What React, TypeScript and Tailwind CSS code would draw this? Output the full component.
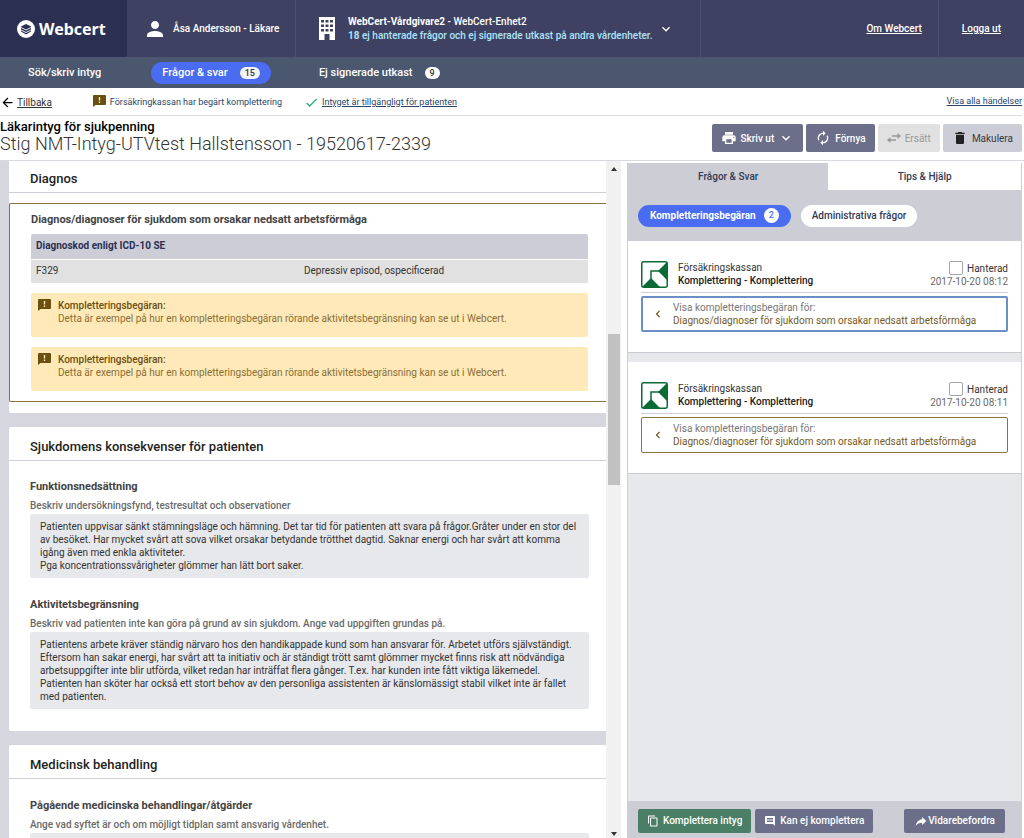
import type { ReactNode } from "react";
import {
    MdArrowBack,
    MdAutorenew,
    MdChevronLeft,
    MdCheck,
    MdComment,
    MdContentCopy,
    MdDelete,
    MdExpandMore,
    MdPerson,
    MdPrint,
    MdReply,
} from "react-icons/md";

interface Question {
    id: number;
    date: string;
    active: boolean;
}

const questions: Question[] = [
    { id: 1, date: "2017-10-20 08:12", active: true },
    { id: 2, date: "2017-10-20 08:11", active: false },
];

function WebcertLogo() {
    return (
        <a href="#" className="flex items-center gap-1 text-white">
            <svg viewBox="0 0 18 18" className="size-[18px]" aria-hidden="true">
                <circle cx="9" cy="9" r="9" fill="#fff" />
                <path d="M4 6.5 9 4 14 6.500V11.500L9 14.500 4 11.500Z" fill="#2b3052" />
                <path d="M4 7.500 9 10 14 7.500M4 10 9 12.500 14 10" fill="none" stroke="#fff" strokeWidth="0.9" />
            </svg>
            <span className="font-['Noto_Sans',sans-serif] text-base font-bold">Webcert</span>
        </a>
    );
}

function BuildingIcon() {
    return (
        <svg viewBox="0 0 16 23" className="h-[23px] w-4 shrink-0" aria-hidden="true">
            <path d="M0 0H16V23H10.5V17H5.5V23H0Z" fill="#fff" />
            <path
                d="M2 3h3v2.5H2zM6.5 3h3v2.5h-3zM11 3h3v2.5h-3zM2 7.5h3V10H2zM6.5 7.5h3V10h-3zM11 7.5h3V10h-3zM2 12h3v2.5H2zM6.5 12h3v2.5h-3zM11 12h3v2.5h-3z"
                fill="#3e4161"
            />
        </svg>
    );
}

function NoticeIcon() {
    return (
        <svg viewBox="0 0 13 12" className="h-3 w-[13px] shrink-0" aria-hidden="true">
            <path d="M1 0H12A1 1 0 0 1 13 1V9A1 1 0 0 1 12 10H2.500L0 12V1A1 1 0 0 1 1 0Z" fill="#6a4f10" />
            <path d="M5.800 2H7.200V5.500H5.800ZM5.800 6.500H7.200V8H5.800Z" fill="#ffe9b8" />
        </svg>
    );
}

function ReplaceIcon() {
    return (
        <svg viewBox="0 0 14 10" className="h-2.5 w-3.5" aria-hidden="true">
            <path d="M5 2.200H10.500V0L14 3 10.500 6V3.800H5ZM9 6.200H3.500V4L0 7l3.500 3V7.800H9Z" fill="currentColor" />
        </svg>
    );
}

function FkLogo() {
    return (
        <svg viewBox="0 0 27 27" className="size-[27px] shrink-0" aria-hidden="true">
            <rect x="0.75" y="0.75" width="25.5" height="25.5" rx="2" fill="#fff" stroke="#0b6b35" strokeWidth="1.5" />
            <path d="M26 1V19L17.500 10.500V9.500Z" fill="#0b6b35" />
            <path d="M1 26 9.500 17.500 10.500 17.500 19 26Z" fill="#0b6b35" />
            <path d="M10 18V10H18" fill="none" stroke="#0b6b35" strokeWidth="1.5" />
        </svg>
    );
}

function Section({ title, children }: { title: string; children: ReactNode }) {
    return (
        <section className="rounded-l-xs bg-white">
            <h2 className="flex h-[34px] items-center border-b border-[#cdced6] pt-1.5 pl-[21px] text-[13px] font-medium text-[#222]">{title}</h2>
            {children}
        </section>
    );
}

function Field({ label, hint, children }: { label: string; hint: string; children?: ReactNode }) {
    return (
        <div>
            <h3 className="text-[11px] leading-4 font-bold text-[#444]">{label}</h3>
            <p className="mt-[3px] text-[10px] leading-4 font-medium text-[#6a6a6a]">{hint}</p>
            <div className="min-h-6 rounded-xs bg-[#e7e8ec] px-2.5 py-1.5 text-[10px] leading-[13px] text-[#333]">{children}</div>
        </div>
    );
}

function CompletionNotice() {
    return (
        <div className="mt-2.5 flex h-11 gap-[7px] rounded-xs bg-[#ffe9b8] px-[7px] pt-1.5 text-[10px] leading-[13px]">
            <NoticeIcon />
            <div>
                <p className="font-medium text-[#6a4f10]">Kompletteringsbegäran:</p>
                <p className="text-[#8a6f33]">Detta är exempel på hur en kompletteringsbegäran rörande aktivitetsbegränsning kan se ut i Webcert.</p>
            </div>
        </div>
    );
}

function QuestionCard({ question }: { question: Question }) {
    return (
        <article className="h-28 border-b border-[#c8c9d2] bg-white px-[13px] pt-5">
            <div className="flex items-start border-b border-[#cdced6] pb-1 text-[10px] leading-[13px]">
                <FkLogo />
                <div className="ml-2.5">
                    <p className="text-[#333]">Försäkringskassan</p>
                    <p className="font-medium text-[#222]">Komplettering - Komplettering</p>
                </div>
                <div className="ml-auto text-right">
                    <label className="flex items-center justify-end gap-1 text-[#333]">
                        <input type="checkbox" className="size-3.5 appearance-none rounded-xs border border-[#a5a5ad] bg-white" />
                        Hanterad
                    </label>
                    <p className="text-[#6a6a6a]">{question.date}</p>
                </div>
            </div>
            <button
                className={
                    question.active
                        ? "mt-[3px] flex w-full items-center rounded-xs border-2 border-[#6a8ec6] py-[3px] pl-2 text-left text-[10px] leading-[13px]"
                        : "mt-[3px] flex w-full items-center rounded-xs border border-[#8a7245] py-1 pl-[9px] text-left text-[10px] leading-[13px]"
                }
            >
                <MdChevronLeft className="size-3.5 text-[#6a4f10]" />
                <span className="ml-2">
                    <span className="block text-[#777]">Visa kompletteringsbegäran för:</span>
                    <span className="block text-[#75591c]">Diagnos/diagnoser för sjukdom som orsakar nedsatt arbetsförmåga</span>
                </span>
            </button>
        </article>
    );
}

export default function App() {
    return (
        <div className="flex h-screen flex-col overflow-hidden bg-white font-[Roboto,sans-serif]">
            <header className="flex h-[57px] shrink-0 bg-[#3e4161] text-[10px] text-white">
                <div className="flex w-[127px] items-center bg-[#2b3052] pl-[17px]">
                    <WebcertLogo />
                </div>
                <div className="flex w-[169px] items-center gap-1.5 border-r border-[#4b4e6e] pl-4 font-medium">
                    <MdPerson className="size-6" />
                    Åsa Andersson - Läkare
                </div>
                <div className="flex w-[405px] items-center border-r border-[#4b4e6e] pl-[23px]">
                    <BuildingIcon />
                    <div className="ml-[13px] leading-[14px]">
                        <p>
                            <b className="font-bold">WebCert-Vårdgivare2</b> <span className="font-medium">- WebCert-Enhet2</span>
                        </p>
                        <p className="font-medium text-[#aee3fb]">
                            <b>18</b> ej hanterade frågor och ej signerade utkast på andra vårdenheter.
                        </p>
                    </div>
                    <button aria-label="Byt vårdenhet" className="ml-1.5">
                        <MdExpandMore className="size-4" />
                    </button>
                </div>
                <div className="ml-auto flex font-medium">
                    <a href="#" className="flex items-center border-r border-[#4b4e6e] px-4 underline">Om Webcert</a>
                    <a href="#" className="flex items-center px-[23px] underline">Logga ut</a>
                </div>
            </header>

            <nav className="flex h-[31px] shrink-0 items-center bg-[#4b566f] pt-px pl-7 text-[11px] font-medium text-white">
                <a href="#">Sök/skriv intyg</a>
                <a href="#" className="ml-[50px] flex h-[22px] items-center gap-3 rounded-full bg-[#4a6cf0] px-[11px]">
                    Frågor &amp; svar
                    <span className="rounded-full bg-[#f3f3f8] px-[5px] text-[9px] leading-3 text-[#333]">15</span>
                </a>
                <a href="#" className="ml-12 flex items-center gap-3">
                    Ej signerade utkast
                    <span className="rounded-full bg-white px-[5px] text-[9px] leading-3 text-[#333]">9</span>
                </a>
            </nav>

            <div className="mr-0.5 flex h-7 shrink-0 items-center border-b border-[#dcdee3] pt-0.5 text-[9px] text-[#2a4468]">
                <a href="#" className="flex items-center gap-0.5 text-[10px] text-[#333]">
                    <MdArrowBack className="size-[15px] text-black" />
                    <span className="underline">Tillbaka</span>
                </a>
                <span className="mr-1 ml-[41px] pb-1">
                    <NoticeIcon />
                </span>
                <span>Försäkringkassan har begärt komplettering</span>
                <MdCheck className="ml-[22px] size-[15px] text-[#2fae82]" />
                <a href="#" className="ml-[3px] underline">Intyget är tillgängligt för patienten</a>
                <a href="#" className="ml-auto pb-0.5 underline">Visa alla händelser</a>
            </div>

            <div className="flex h-11 shrink-0 justify-between">
                <div className="pt-[3px]">
                    <h1 className="text-[13px] leading-4 font-medium text-black">Läkarintyg för sjukpenning</h1>
                    <p className="text-lg leading-[18px] font-light text-[#333]">Stig NMT-Intyg-UTVtest Hallstensson - 19520617-2339</p>
                </div>
                <div className="mr-0.5 flex items-center gap-[3px] text-[10px] font-medium">
                    <button className="flex h-7 items-center gap-1 rounded-xs bg-[#6b6f89] px-[9px] text-white">
                        <MdPrint className="size-4" />
                        Skriv ut
                        <MdExpandMore className="size-4" />
                    </button>
                    <button className="flex h-7 items-center gap-1 rounded-xs bg-[#6b6f89] px-[9px] text-white">
                        <MdAutorenew className="size-4" />
                        Förnya
                    </button>
                    <button disabled className="flex h-7 items-center gap-1 rounded-xs bg-[#e1e1e1] px-[9px] font-normal text-[#999]">
                        <ReplaceIcon />
                        Ersätt
                    </button>
                    <button className="flex h-7 items-center gap-1 rounded-xs bg-[#cdcdd7] px-[9px] font-normal text-[#3a3a3a]">
                        <MdDelete className="size-4 text-[#222]" />
                        Makulera
                    </button>
                </div>
            </div>

            <main className="flex min-h-0 flex-1 border-t border-[#d8d8df]">
                <div className="min-w-0 flex-1 overflow-hidden bg-[#d6d6de] pl-[9px]">
                    <div className="-mt-0.5 space-y-3.5">
                        <Section title="Diagnos">
                            <div className="pt-2.5 pb-[11px]">
                                <div className="rounded-l-xs border border-r-0 border-[#8a7245] pt-2 pr-[18px] pb-2.5 pl-[21px]">
                                    <h3 className="text-[11px] leading-4 font-bold text-[#444]">Diagnos/diagnoser för sjukdom som orsakar nedsatt arbetsförmåga</h3>
                                    <table className="mt-1.5 w-full table-fixed text-left text-[10px] leading-[14px]">
                                        <colgroup>
                                            <col className="w-[49%]" />
                                            <col />
                                        </colgroup>
                                        <thead>
                                            <tr className="h-[25px] border-b border-white bg-[#cdcdd7] text-[#2b3052]">
                                                <th colSpan={2} className="rounded-t-xs px-[5px] font-bold">Diagnoskod enligt ICD-10 SE</th>
                                            </tr>
                                        </thead>
                                        <tbody>
                                            <tr className="h-6 bg-[#e1e1e1] text-[#333]">
                                                <td className="px-[5px]">F329</td>
                                                <td>Depressiv episod, ospecificerad</td>
                                            </tr>
                                        </tbody>
                                    </table>
                                    <CompletionNotice />
                                    <CompletionNotice />
                                </div>
                            </div>
                        </Section>
                        <Section title="Sjukdomens konsekvenser för patienten">
                            <div className="space-y-[19px] pt-[18px] pr-[17px] pb-[22px] pl-[21px]">
                                <Field label="Funktionsnedsättning" hint="Beskriv undersökningsfynd, testresultat och observationer">
                                    <p>
                                        Patienten uppvisar sänkt stämningsläge och hämning. Det tar tid för patienten att svara på frågor.Gråter under en stor del av
                                        besöket. Har mycket svårt att sova vilket orsakar betydande trötthet dagtid. Saknar energi och har svårt att komma igång även
                                        med enkla aktiviteter.
                                    </p>
                                    <p>Pga koncentrationssvårigheter glömmer han lätt bort saker.</p>
                                </Field>
                                <Field
                                    label="Aktivitetsbegränsning"
                                    hint="Beskriv vad patienten inte kan göra på grund av sin sjukdom. Ange vad uppgiften grundas på."
                                >
                                    <p>
                                        Patientens arbete kräver ständig närvaro hos den handikappade kund som han ansvarar för. Arbetet utförs självständigt.
                                        Eftersom han sakar energi, har svårt att ta initiativ och är ständigt trött samt glömmer mycket finns risk att nödvändiga
                                        arbetsuppgifter inte blir utförda, vilket redan har inträffat flera gånger. T.ex. har kunden inte fått viktiga läkemedel.
                                    </p>
                                    <p>
                                        Patienten han sköter har också ett stort behov av den personliga assistenten är känslomässigt stabil vilket inte är fallet med
                                        patienten.
                                    </p>
                                </Field>
                            </div>
                        </Section>
                        <Section title="Medicinsk behandling">
                            <div className="pt-[19px] pr-[17px] pb-[22px] pl-[21px]">
                                <Field label="Pågående medicinska behandlingar/åtgärder" hint="Ange vad syftet är och om möjligt tidplan samt ansvarig vårdenhet." />
                            </div>
                        </Section>
                    </div>
                </div>

                {/* scrollbar for the certificate pane */}
                <div className="flex w-[15px] shrink-0 flex-col items-center bg-[#f1f1f1]">
                    <span className="my-1.5 border-x-[3px] border-b-[4px] border-x-transparent border-b-[#333]" />
                    <span className="grow-[26]" />
                    <span className="w-3 grow-[25] bg-[#c1c1c1]" />
                    <span className="grow-[57]" />
                    <span className="my-0.5 border-x-[3px] border-t-[4px] border-x-transparent border-t-[#333]" />
                </div>

                <aside className="mt-0.5 mr-0.5 ml-1.5 flex w-[395px] shrink-0 flex-col border-x border-[#cdcdd7] bg-[#e7e8ec]">
                    <div role="tablist" className="flex h-[27px] shrink-0 bg-[#cdcdd5] text-[10px] font-medium text-[#333a55]">
                        <button role="tab" aria-selected="true" className="w-[51%]">Frågor &amp; Svar</button>
                        <button role="tab" aria-selected="false" className="flex-1 bg-white">Tips &amp; Hjälp</button>
                    </div>
                    <div className="flex h-[51px] shrink-0 items-center gap-2.5 bg-[#cdcdd5] px-2.5 text-[10px] font-medium">
                        <button className="flex h-[22px] items-center gap-2 rounded-full bg-[#4a6cf0] px-3 font-bold text-white">
                            Kompletteringsbegäran
                            <span className="size-[15px] rounded-full bg-white text-[9px] leading-[15px] font-medium text-[#4a6cf0]">2</span>
                        </button>
                        <button className="h-[22px] rounded-full bg-white px-[11px] text-[#333a55]">Administrativa frågor</button>
                    </div>
                    <div className="min-h-0 flex-1 space-y-[9px] overflow-hidden">
                        {questions.map((question) => (
                            <QuestionCard key={question.id} question={question} />
                        ))}
                    </div>
                    <div className="flex h-[37px] shrink-0 items-center gap-1 bg-[#cdcdd5] px-2.5 pt-0.5 text-[10px] font-medium text-white">
                        <button className="flex h-6 items-center gap-1 rounded-xs bg-[#4a7f66] px-[9px]">
                            <MdContentCopy className="size-3" />
                            Komplettera intyg
                        </button>
                        <button className="flex h-6 items-center gap-1 rounded-xs bg-[#6b6f89] px-[9px]">
                            <MdComment className="size-3" />
                            Kan ej komplettera
                        </button>
                        <button className="mr-1.5 ml-auto flex h-6 items-center rounded-xs bg-[#6b6f89] px-2.5">
                            <MdReply className="size-3.5 -scale-x-100" />
                            Vidarebefordra
                        </button>
                    </div>
                </aside>
            </main>
        </div>
    );
}
